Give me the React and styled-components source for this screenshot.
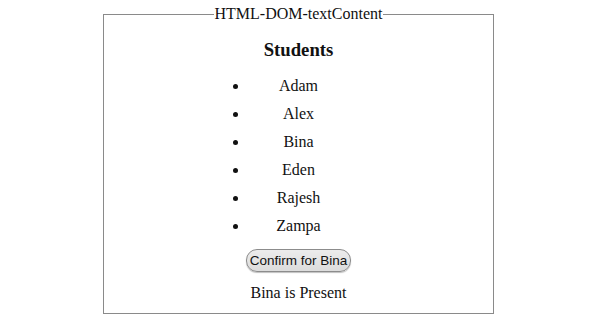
import styled, { createGlobalStyle } from "styled-components";

const GlobalStyle = createGlobalStyle`
  body {
    margin: 0;
    padding-top: 5px;
    background: #ffffff;
    font-family: "Liberation Serif", "Times New Roman", serif;
    color: #111111;
  }
`;

// outer framed box
const Frame = styled.fieldset`
  box-sizing: border-box;
  width: 391px;
  margin: 0 0 0 103px;
  padding: 0 0 10px;
  border: 1px solid #8a8a8a;
  display: flex;
  flex-direction: column;
  align-items: center;
  font-size: 16px;
`;

const Legend = styled.legend`
  margin: 0 auto;
  padding: 0 1px;
  font-size: 16px;
  line-height: 18px;
`;

const Title = styled.h3`
  margin: 16px 0 0;
  font-size: 18.7px;
  line-height: 22px;
  font-weight: bold;
  text-align: center;
`;

const List = styled.ul`
  width: 100px;
  margin: 11px auto 0;
  padding: 0;
  list-style: disc outside;
`;

const Item = styled.li`
  text-align: center;
  line-height: 28px;
  height: 28px;
  font-size: 16px;
`;

const Button = styled.button`
  margin-top: 9px;
  height: 23px;
  padding: 0 3px;
  font-family: "Liberation Sans", Arial, sans-serif;
  font-size: 13.5px;
  color: #111;
  background: linear-gradient(#ececec, #dcdcdc);
  border: 1px solid #8c8c8c;
  border-radius: 11px;
  box-shadow: 0 1px 1px rgba(0, 0, 0, 0.25);
`;

const Status = styled.div`
  margin-top: 11px;
  line-height: 20px;
  font-size: 16px;
`;

const students = ["Adam", "Alex", "Bina", "Eden", "Rajesh", "Zampa"];

const App = () => {
  return (
    <>
      <GlobalStyle />
      <Frame>
        <Legend>HTML-DOM-textContent</Legend>
        <Title>Students</Title>
        <List>
          {students.map((name) => (
            <Item key={name}>{name}</Item>
          ))}
        </List>
        <Button>Confirm for Bina</Button>
        <Status>Bina is Present</Status>
      </Frame>
    </>
  );
};

export default App;
